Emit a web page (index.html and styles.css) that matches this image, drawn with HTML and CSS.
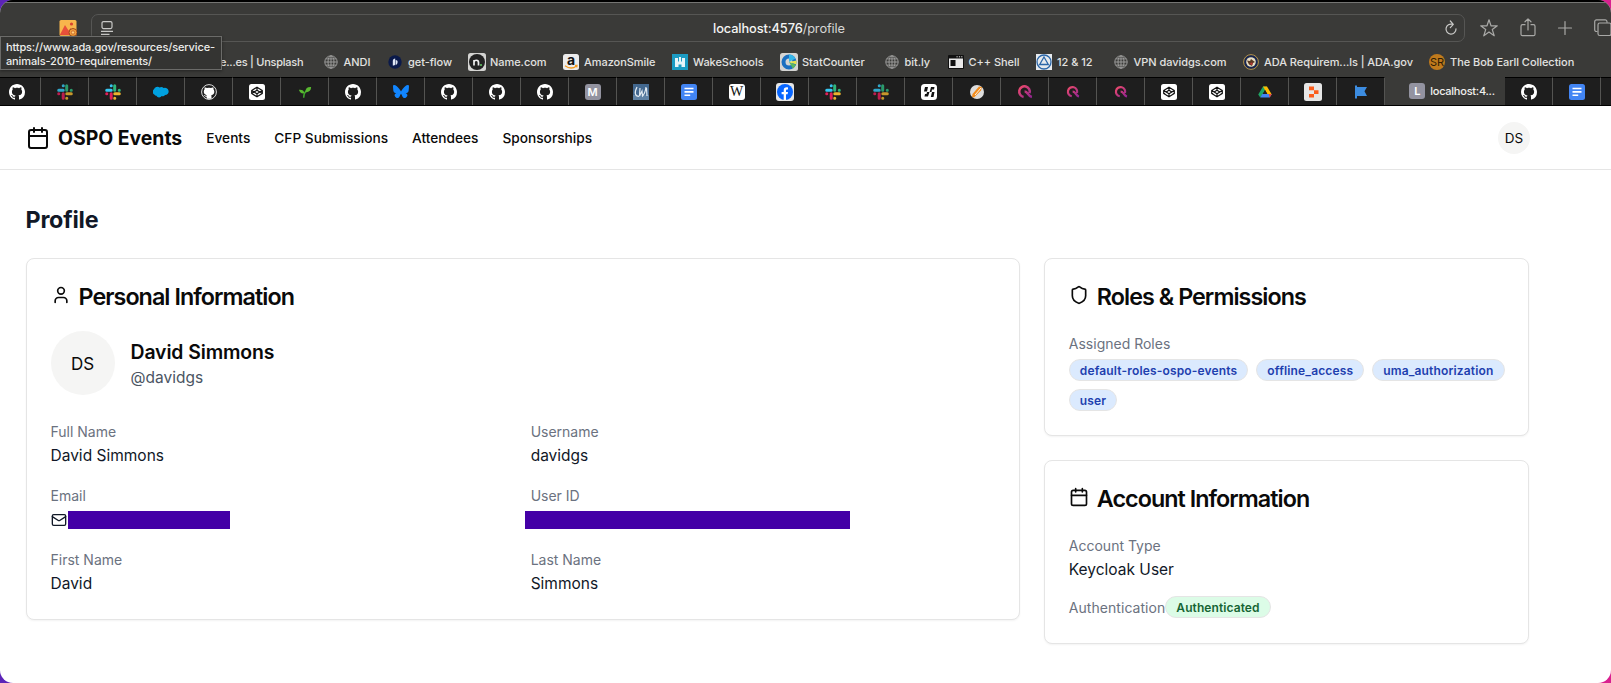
FILE: index.html
```html
<!DOCTYPE html>
<html lang="en">
<head>
<meta charset="utf-8">
<title>OSPO Events</title>
<link rel="stylesheet" href="styles.css">
</head>
<body>
<svg class="sprite" aria-hidden="true">
  <symbol id="github" viewBox="0 0 16 16"><path d="M8 0C3.58 0 0 3.58 0 8c0 3.54 2.29 6.53 5.47 7.59.4.07.55-.17.55-.38 0-.19-.01-.82-.01-1.49-2.01.37-2.53-.49-2.69-.94-.09-.23-.48-.94-.82-1.13-.28-.15-.68-.52-.01-.53.63-.01 1.08.58 1.23.82.72 1.21 1.87.87 2.33.66.07-.52.28-.87.51-1.07-1.78-.2-3.64-.89-3.64-3.95 0-.87.31-1.59.82-2.15-.08-.2-.36-1.02.08-2.12 0 0 .67-.21 2.2.82.64-.18 1.32-.27 2-.27s1.36.09 2 .27c1.53-1.04 2.2-.82 2.2-.82.44 1.1.16 1.92.08 2.12.51.56.82 1.27.82 2.15 0 3.07-1.87 3.75-3.65 3.95.29.25.54.73.54 1.48 0 1.07-.01 1.93-.01 2.2 0 .21.15.46.55.38A8.01 8.01 0 0 0 16 8c0-4.42-3.58-8-8-8z" fill="#fff"/></symbol>
  <symbol id="github-ring" viewBox="0 0 16 16"><circle cx="8" cy="8" r="7.4" fill="#1e1e1e" stroke="#ddd" stroke-width="1"/><path d="M3.6 3.2 6 4.1a7 7 0 0 1 4 0l2.4-.9.2 2.400c1.600 2.400.400 5.400-2.500 5.800.5.700.5 1.500.4 3.400H5.700v-2c-2 .3-2.200-1-3.200-1.700 1.300-.3 1.700 1 3 .7.1-.3 0-.2.400-.600C2.900 10.800 2 7.600 3.500 5.600z" fill="#fff"/></symbol>
  <symbol id="slack" viewBox="0 0 16 16"><g stroke-width="3" stroke-linecap="round" fill="none"><path d="M6.200 1.800h.1M1.700 6.300h4.500" stroke="#36c5f0"/><path d="M9.700 1.700v4.500M14.200 6.300h.1" stroke="#2eb67d"/><path d="M9.800 9.800h4.500M9.700 14.200h.1" stroke="#ecb22e"/><path d="M6.200 9.800v4.500M1.700 9.800h.1" stroke="#e01e5a"/></g></symbol>
  <symbol id="cloud" viewBox="0 0 16 16"><path d="M1.300 10.600A3.300 3.300 0 0 1 1 5.200a3.600 3.600 0 0 1 5.600-1.700 3.100 3.100 0 0 1 4 .6A3.600 3.600 0 1 1 12 11a2.600 2.600 0 0 1-3.300 1 3 3 0 0 1-5.300-.2 2.500 2.500 0 0 1-2.100-1.200z" fill="#00a1e0"/></symbol>
  <symbol id="codepen" viewBox="0 0 16 16"><rect width="16" height="16" rx="2.500" fill="#fff"/><path d="M8 3.200 13.300 6.500v3L8 12.800 2.700 9.500v-3zM8 3.200v3M8 9.800v3M2.700 6.500 8 9.800l5.300-3.300M2.700 9.500 8 6.200l5.300 3.300" fill="none" stroke="#111" stroke-width="1.200" stroke-linejoin="round"/></symbol>
  <symbol id="sprout" viewBox="0 0 16 16"><path d="M6.500 14.500c0-4 .8-6 3.300-8" stroke="#3fa52d" stroke-width="1.700" fill="none"/><path d="M7.400 9.500C4 10 2 8.800 1 5.500c3.600-.4 5.900.7 6.400 4zM8.500 8.200C8.300 4 10.500 2 15 2.300c0 4-2.300 6.200-6.500 5.900z" fill="#58b830"/></symbol>
  <symbol id="bluesky" viewBox="0 0 16 16"><path d="M3.500 1.900C5.300 3.300 7.300 6 8 7.500c.7-1.500 2.700-4.200 4.500-5.600 1.300-1 3.500-1.700 3.500.6 0 .5-.3 3.900-.4 4.500-.5 1.900-2.400 2.400-4.100 2.100 3 .5 3.700 2.200 2.100 3.800-3.100 3.200-4.500-.8-4.800-1.800L8 9.700l-.8 1.400c-.3 1-1.700 5-4.800 1.800-1.600-1.600-.9-3.300 2.100-3.800-1.700.3-3.600-.2-4.100-2.100C.3 6.400 0 3 0 2.500c0-2.300 2.100-1.600 3.500-.6z" fill="#1185fe"/></symbol>
  <symbol id="docs" viewBox="0 0 16 16"><rect width="16" height="16" rx="2.500" fill="#4285f4"/><path d="M3.500 4.500h9M3.500 7.900h9M3.500 11.300h5.700" stroke="#fff" stroke-width="1.600"/></symbol>
  <symbol id="signature" viewBox="0 0 16 16"><rect width="16" height="16" fill="#43688f"/><path d="M0 11h16v5H0z" fill="#5f82a4"/><path d="M4 3C1 9 2 12 6 12.500M7 4l-.5 8L9 7l.5 5c2-2 3-5 3.500-9M13.500 4l.5 8" fill="none" stroke="#e4ecf2" stroke-width="1.200"/></symbol>
  <symbol id="facebook" viewBox="0 0 18 18"><rect width="18" height="18" rx="3" fill="#e6e6e6"/><circle cx="9" cy="9" r="8" fill="#0866ff"/><path d="M7.700 17v-5.700H5.600V8.900h2.100V7.600c0-2.600 1.300-3.600 4.300-3.200v2.100c-1.500-.1-2 .1-2 1.400v1H12l-.4 2.400H10V17z" fill="#fff"/></symbol>
  <symbol id="checker" viewBox="0 0 16 16"><rect width="16" height="16" rx="3.500" fill="#fff"/><path d="M4 3h3L6 7.500H3zM10 3h3.500L13 5.500h-2L10.500 8H8.700zM6 8h2.500L7 12.500H3.500L4 10h1.500zM11 8h2.500l-1 5H9.800z" fill="#111"/></symbol>
  <symbol id="orange-ball" viewBox="0 0 16 16"><circle cx="8" cy="8" r="7" fill="#ddd"/><path d="M3.500 10 10 2.500l3 .5-1 3.500L5 13.500l-2-.5z" fill="#f28c1c"/><path d="m6 11 6-7" stroke="#fff" stroke-width=".9"/></symbol>
  <symbol id="quill" viewBox="0 0 16 16"><defs><linearGradient id="pink" x1="0" y1="0" x2="1" y2="1"><stop offset="0" stop-color="#ef4b6c"/><stop offset="1" stop-color="#8f2390"/></linearGradient></defs><path d="M6.600 12.900A5.300 5.300 0 1 1 12.600 9.200M7.600 7.500c1.600 0 2.300.8 3.300 2.200 1 1.600 1.800 3 4 3.400" fill="none" stroke="url(#pink)" stroke-width="2.500"/></symbol>
  <symbol id="drive" viewBox="0 0 16 16"><path d="M5.700 1.800h4.600L5 11l-2.500 3.200L.3 10.900z" fill="#1fa463"/><path d="M5.700 1.800h4.600l5.400 9.100H11z" fill="#ffba00"/><path d="m2.600 14.300 2.300-4h10.800l-2.300 4z" fill="#4285f4"/><path d="M12.200 10.300h3.500l-2.300 4z" fill="#ea4335"/><path d="m8 5.800 2.600 4.500H5.400z" fill="#1e1e1e"/></symbol>
  <symbol id="blocks" viewBox="0 0 18 18"><rect width="18" height="18" rx="2.500" fill="#e6e6e6"/><path d="M5 3.500h5v3.700H5zM10 7.200h4.500v3.700H10zM5 10.900h5v3.700H5z" fill="#fb5d1d"/></symbol>
  <symbol id="flag" viewBox="0 0 16 16"><path d="M2 1.500h2V3h10l-2.500 4.300L14 12H4v2.500H2z" fill="#3c8ce0"/></symbol>
  <symbol id="globe" viewBox="0 0 14 14"><g fill="none" stroke="#a3a3a1" stroke-width=".9"><circle cx="7" cy="7" r="6.200"/><ellipse cx="7" cy="7" rx="3" ry="6.200"/><path d="M7 .8v12.400M.8 7h12.400M1.700 3.900h10.600M1.700 10.100h10.600"/></g></symbol>
  <symbol id="calendar" viewBox="0 0 24 24"><g fill="none" stroke="currentColor" stroke-width="2" stroke-linecap="round" stroke-linejoin="round"><path d="M8 2v4M16 2v4M3 10h18"/><rect x="3" y="4" width="18" height="18" rx="2"/></g></symbol>
</svg>

<div class="window">
  <div class="chrome">
    <div class="toolbar">
      <svg class="picture-icon" viewBox="0 0 18 18"><rect x=".5" y="1" width="17" height="16" rx="1.500" fill="#f8b64c"/><path d="M.8 16 6 6l3.500 5.500L12 9v7z" fill="#e8503a"/><circle cx="12.500" cy="5" r="1.600" fill="#d9432f"/><circle cx="14" cy="13.500" r="4" fill="#f3a33b" stroke="#a04a20"/><circle cx="14" cy="13.500" r="1.700" fill="#ffd27a" stroke="#c65b2a" stroke-width=".8"/></svg>
      <div class="address">
        <svg class="reader-icon" viewBox="0 0 14 16"><g fill="none" stroke="#c9c9c7" stroke-width="1.200"><rect x="2" y="1.600" width="10" height="7" rx="1.500"/><path d="M1 11.400h12M1 14.400h8.500"/></g></svg>
        <span class="url"><b>localhost:4576</b>/profile</span>
        <svg class="reload-icon" viewBox="0 0 14 16"><path d="M8.500 4.300A5 5 0 1 0 12 8.800M6.300 1 9.300 4.300 6.300 7.600" fill="none" stroke="#c9c9c7" stroke-width="1.200" stroke-linecap="round" stroke-linejoin="round"/></svg>
      </div>
      <svg class="tool star" viewBox="0 0 20 20"><path d="m10 1.800 2 6h6.300l-5 3.800 1.900 6.200L10 14.100l-5.200 3.700 1.900-6.200-5-3.800H8z" fill="none" stroke="#a9a9a7" stroke-width="1.200" stroke-linejoin="round"/></svg>
      <svg class="tool share" viewBox="0 0 20 20"><path d="M7 6.700H4.500a1.500 1.500 0 0 0-1.500 1.500v8a1.500 1.500 0 0 0 1.500 1.500h11a1.500 1.500 0 0 0 1.500-1.500v-8a1.500 1.500 0 0 0-1.500-1.500H13M10 12V1M7 3.800 10 .9l3 2.900" fill="none" stroke="#a9a9a7" stroke-width="1.200" stroke-linecap="round" stroke-linejoin="round"/></svg>
      <svg class="tool plus" viewBox="0 0 20 20"><path d="M10 3.500v13M3.500 10h13" stroke="#a9a9a7" stroke-width="1.200" stroke-linecap="round"/></svg>
      <svg class="tool copies" viewBox="0 0 20 20"><g fill="none" stroke="#a9a9a7" stroke-width="1.200"><path d="M4.500 13.500H3.500A1.800 1.800 0 0 1 1.700 11.700v-8A1.800 1.800 0 0 1 3.500 1.900h8.800A1.800 1.800 0 0 1 14 3.700v1"/><rect x="5" y="5" width="13" height="12.500" rx="1.800"/></g></svg>
    </div>
    <div class="bookmarks">
      <span class="bm first"><i><svg width="16" height="16" viewBox="0 0 16 16"><rect width="16" height="16" rx="2" fill="#e6e6e6"/></svg></i><em>e...es | Unsplash</em></span>
      <span class="bm"><i><svg width="14" height="14"><use href="#globe"/></svg></i><em>ANDI</em></span>
      <span class="bm"><i><svg width="14" height="14" viewBox="0 0 14 14"><circle cx="7" cy="7" r="6.700" fill="#0b1a4a"/><path d="M4.800 6c0-1.500 1-2.500 2.400-2.500V9c0 1-1 1.600-2.400 1.600zM7.700 5c1.200 0 1.900.7 1.900 1.800 0 1.700-.5 2.700-1.900 3.500z" fill="#dfe6f5"/></svg></i><em>get-flow</em></span>
      <span class="bm"><i><svg width="18" height="18" viewBox="0 0 18 18"><rect width="18" height="18" rx="2.500" fill="#d4d4d2"/><circle cx="9" cy="9" r="8" fill="#222"/><path d="M6 12.500V7M6 9c.5-2.400 4.500-2.400 4.500.5v3" fill="none" stroke="#eee" stroke-width="1.700"/><circle cx="13" cy="12" r="1" fill="#6c6"/></svg></i><em>Name.com</em></span>
      <span class="bm"><i><svg width="16" height="16" viewBox="0 0 16 16"><rect width="16" height="16" rx="2.500" fill="#ececec"/><text x="8" y="11" text-anchor="middle" class="glyph-a">a</text><path d="M2 11.700c4 3 8 3 11.500.3M12 11.500l2-.1-.3 2" fill="none" stroke="#f39a1f" stroke-width="1.300"/></svg></i><em>AmazonSmile</em></span>
      <span class="bm"><i><svg width="16" height="16" viewBox="0 0 16 16"><rect width="16" height="16" fill="#1c9cc4"/><path d="M3 4h3v3.500h1V3h2v4.500h1V4h3v9H9.500v-2.500h-3V13H3z" fill="#e8f5fa"/></svg></i><em>WakeSchools</em></span>
      <span class="bm"><i><svg width="18" height="18" viewBox="0 0 18 18"><rect width="18" height="18" rx="2.500" fill="#d4d4d2"/><circle cx="9" cy="9" r="5.500" fill="none" stroke="#1a6fc0" stroke-width="4"/><path d="M9 9V1.500a7.500 7.500 0 0 1 6.500 4z" fill="#35b6e8"/><path d="m9 9 7.500-1.500v4z" fill="#e8e34a"/><path d="m9 9 7 3-3 3.700z" fill="#5cb85c"/></svg></i><em>StatCounter</em></span>
      <span class="bm"><i><svg width="14" height="14"><use href="#globe"/></svg></i><em>bit.ly</em></span>
      <span class="bm"><i><svg width="16" height="14" viewBox="0 0 16 14"><rect width="16" height="14" rx="1" fill="#111"/><rect x="1" y="3.500" width="14" height="9.500" fill="#e9e9e9"/><rect x="2.500" y="5" width="5" height="6" fill="#111"/><path d="M8.500 1.800h1.200M10.900 1.800h1.200M13.200 1.800h1.200" stroke="#ddd"/></svg></i><em>C++ Shell</em></span>
      <span class="bm"><i><svg width="16" height="16" viewBox="0 0 16 16"><rect width="16" height="16" fill="#e6eaee"/><circle cx="8" cy="8" r="7" fill="none" stroke="#2b66a8" stroke-width="1.300"/><path d="m8 3 4.300 7.500H3.700z" fill="none" stroke="#2b66a8" stroke-width="1.300"/></svg></i><em>12 &amp; 12</em></span>
      <span class="bm"><i><svg width="14" height="14"><use href="#globe"/></svg></i><em>VPN davidgs.com</em></span>
      <span class="bm"><i><svg width="16" height="16" viewBox="0 0 16 16"><circle cx="8" cy="8" r="7.400" fill="#18264f" stroke="#b79347" stroke-width="1"/><circle cx="8" cy="8" r="4.800" fill="#e9dfc4"/><path d="m4 6.500 3 .5 1-2 4 3-2 1-1 3-3-1.500z" fill="#5b3a22"/><path d="m7 9 2.500-.5v2L8 11z" fill="#b33"/></svg></i><em>ADA Requirem...ls | ADA.gov</em></span>
      <span class="bm"><i><svg width="16" height="16" viewBox="0 0 16 16"><circle cx="8" cy="8" r="8" fill="#c07a1c"/><text x="8" y="12" text-anchor="middle" class="glyph-sr">SR</text></svg></i><em>The Bob Earll Collection</em></span>
    </div>
    <div class="tabs">
      <span class="tab"><svg><use href="#github"/></svg></span>
      <span class="tab"><svg class="dim"><use href="#slack"/></svg></span>
      <span class="tab"><svg><use href="#slack"/></svg></span>
      <span class="tab"><svg><use href="#cloud"/></svg></span>
      <span class="tab"><svg><use href="#github-ring"/></svg></span>
      <span class="tab"><svg><use href="#codepen"/></svg></span>
      <span class="tab"><svg class="small"><use href="#sprout"/></svg></span>
      <span class="tab"><svg><use href="#github"/></svg></span>
      <span class="tab"><svg><use href="#bluesky"/></svg></span>
      <span class="tab"><svg><use href="#github"/></svg></span>
      <span class="tab"><svg><use href="#github"/></svg></span>
      <span class="tab"><svg><use href="#github"/></svg></span>
      <span class="tab"><b class="letter">M</b></span>
      <span class="tab"><svg><use href="#signature"/></svg></span>
      <span class="tab"><svg><use href="#docs"/></svg></span>
      <span class="tab"><b class="letter wiki">W</b></span>
      <span class="tab"><svg class="big"><use href="#facebook"/></svg></span>
      <span class="tab"><svg><use href="#slack"/></svg></span>
      <span class="tab"><svg class="dim"><use href="#slack"/></svg></span>
      <span class="tab"><svg><use href="#checker"/></svg></span>
      <span class="tab"><svg><use href="#orange-ball"/></svg></span>
      <span class="tab"><svg><use href="#quill"/></svg></span>
      <span class="tab"><svg class="small"><use href="#quill"/></svg></span>
      <span class="tab"><svg class="small"><use href="#quill"/></svg></span>
      <span class="tab"><svg><use href="#codepen"/></svg></span>
      <span class="tab"><svg><use href="#codepen"/></svg></span>
      <span class="tab"><svg class="small"><use href="#drive"/></svg></span>
      <span class="tab"><svg class="big"><use href="#blocks"/></svg></span>
      <span class="tab"><svg><use href="#flag"/></svg></span>
      <span class="tab active"><b class="letter">L</b><em>localhost:4...</em></span>
      <span class="tab"><svg><use href="#github"/></svg></span>
      <span class="tab"><svg><use href="#docs"/></svg></span>
      <span class="tab"></span>
    </div>
    <div class="tooltip">https://www.ada.gov/resources/service-<br>animals-2010-requirements/</div>
  </div>

  <header class="site-header">
    <svg class="logo"><use href="#calendar"/></svg>
    <span class="brand">OSPO Events</span>
    <nav class="nav"><a>Events</a><a>CFP Submissions</a><a>Attendees</a><a>Sponsorships</a></nav>
    <span class="avatar small-avatar">DS</span>
  </header>

  <main class="main">
    <h1>Profile</h1>
    <div class="layout">
      <section class="card">
        <h2><svg viewBox="0 0 24 24"><g fill="none" stroke="currentColor" stroke-width="2" stroke-linecap="round" stroke-linejoin="round"><path d="M19 21v-2a4 4 0 0 0-4-4H9a4 4 0 0 0-4 4v2"/><circle cx="12" cy="7" r="4"/></g></svg><span>Personal Information</span></h2>
        <div class="person">
          <span class="avatar big-avatar">DS</span>
          <div><h3>David Simmons</h3><p class="handle">@davidgs</p></div>
        </div>
        <div class="fields">
          <div><label>Full Name</label><p>David Simmons</p></div>
          <div><label>Username</label><p>davidgs</p></div>
          <div><label>Email</label><p class="masked"><svg viewBox="0 0 24 24"><g fill="none" stroke="currentColor" stroke-width="2" stroke-linecap="round" stroke-linejoin="round"><rect x="2" y="4" width="20" height="16" rx="2"/><path d="m22 7-8.970 5.700a1.940 1.940 0 0 1-2.060 0L2 7"/></g></svg><i class="mask mask-email"></i></p></div>
          <div><label>User ID</label><p class="masked"><i class="mask mask-id"></i></p></div>
          <div><label>First Name</label><p>David</p></div>
          <div><label>Last Name</label><p>Simmons</p></div>
        </div>
      </section>
      <div class="side">
        <section class="card">
          <h2><svg viewBox="0 0 24 24"><path d="M20 13c0 5-3.500 7.500-7.660 8.950a1 1 0 0 1-.67-.01C7.500 20.500 4 18 4 13V6a1 1 0 0 1 1-1c2 0 4.500-1.200 6.240-2.720a1.170 1.170 0 0 1 1.520 0C14.510 3.810 17 5 19 5a1 1 0 0 1 1 1z" fill="none" stroke="currentColor" stroke-width="2" stroke-linecap="round" stroke-linejoin="round"/></svg><span>Roles &amp; Permissions</span></h2>
          <label>Assigned Roles</label>
          <div class="chips"><span class="chip">default-roles-ospo-events</span><span class="chip">offline_access</span><span class="chip">uma_authorization</span><span class="chip">user</span></div>
        </section>
        <section class="card">
          <h2><svg><use href="#calendar"/></svg><span>Account Information</span></h2>
          <div><label>Account Type</label><p>Keycloak User</p></div>
          <div class="auth"><label>Authentication</label><span class="chip green">Authenticated</span></div>
        </section>
      </div>
    </div>
  </main>
</div>
</body>
</html>
```
FILE: styles.css
```css
* { box-sizing: border-box; }
body {
  margin: 0;
  height: 683px;
  overflow: hidden;
  font-family: Inter, "Liberation Sans", sans-serif;
  color: #0a0a0a;
  background: linear-gradient(90deg, #5c24b8 0 50%, #d9208f 50%);
}
.sprite { position: absolute; width: 0; height: 0; }
.window { height: 683px; background: #fff; border-radius: 13px; overflow: hidden; }
svg { display: block; flex: none; }
em, i { font-style: normal; }

/* Browser chrome */
.chrome { position: relative; height: 106px; background: #3a3a38; border-top: 2px solid #000; border-bottom: 1px solid #000; box-shadow: inset 0 1px #757573; overflow: hidden; }
.toolbar { display: flex; align-items: center; height: 51px; padding-left: 59px; }
.picture-icon { width: 18px; height: 18px; margin-right: 14px; }
.address { display: flex; flex: none; align-items: center; width: 1374px; height: 28px; padding: 0 6px 0 8px; border: 1px solid #565654; border-radius: 7px; }
.reader-icon { width: 14px; height: 16px; }
.reload-icon { width: 14px; height: 16px; }
.url { flex: 1; text-align: center; font-size: 12.800px; letter-spacing: -.1px; color: #d6d6d4; padding-top: 1px; }
.url b { font-weight: 500; color: #f4f4f2; }
.tool { width: 20px; height: 20px; }
.star { margin-left: 14px; }
.share { margin-left: 19px; }
.plus { margin-left: 17px; }
.copies { margin-left: 18px; }

.bookmarks {
  display: grid;
  grid-template-columns: 184.5px 64.5px 82px 94px 109px 109px 102.5px 64px 88.5px 76.5px 130.5px 186px auto;
  height: 24px;
  margin-top: -3px;
  padding-left: 136px;
  font-size: 11px;
  letter-spacing: -.05px;
  font-weight: 500;
  color: #e2e2e0;
  white-space: nowrap;
}
.bm { display: flex; align-items: center; gap: 3px; }
.bm i { display: flex; justify-content: center; width: 20px; }
.first em { margin-left: 61px; letter-spacing: -.25px; }
.glyph-a { font: bold 14px Inter, sans-serif; fill: #111; }
.glyph-sr { font: 11px Inter, sans-serif; fill: #2e1c05; }

.tabs { display: flex; height: 28px; margin-top: 3px; margin-left: -7px; }
.tab { display: flex; flex: none; align-items: center; justify-content: center; width: 48px; height: 28px; border-right: 1px solid #545452; border-top: 1px solid #000; background: #1e1e1e; }
.tab svg { width: 16px; height: 16px; }
.tab .small { width: 14px; height: 14px; }
.tab .big { width: 18px; height: 18px; }
.tab .dim { opacity: .82; }
.tab.active { width: 120px; gap: 5px; padding-left: 14px; border-top: 0; border-right: 0; background: #3a3a38; font-size: 11px; letter-spacing: -.25px; font-weight: 500; color: #f0f0ee; }
.letter { display: flex; align-items: center; justify-content: center; width: 16px; height: 16px; border-radius: 3px; background: #9393a0; color: #fff; font-size: 11px; font-weight: 600; }
.wiki { background: #fff; color: #111; font: 14px "Liberation Serif", serif; }
.tooltip { position: absolute; left: 0; top: 34px; width: 222px; height: 34px; padding: 3px 0 0 5px; border: 1px solid #6b6b69; background: #343432; box-shadow: 0 1px 3px #0006; font-size: 11px; letter-spacing: -.13px; line-height: 14px; font-weight: 500; color: #ededeb; white-space: nowrap; }

/* Site header */
.site-header { display: flex; align-items: center; height: 64px; padding: 0 81px 0 26px; border-bottom: 1px solid #e5e5e5; }
.logo { width: 24px; height: 24px; margin-right: 8px; }
.brand { font-size: 19.400px; font-weight: 700; margin-right: 24px; }
.nav { display: flex; gap: 24px; flex: 1; font-size: 13.700px; font-weight: 500; }
.avatar { display: flex; align-items: center; justify-content: center; border-radius: 50%; background: #f5f5f4; }
.small-avatar { width: 32px; height: 32px; font-size: 13.500px; }
.big-avatar { width: 64px; height: 64px; font-size: 17px; padding-top: 1px; }

/* Profile page */
.main { padding: 32px 82px 0 25.500px; }
h1, h2, h3, p { margin: 0; }
h1 { height: 32px; font-size: 23.300px; line-height: 35px; letter-spacing: -.2px; font-weight: 700; color: #111827; margin-bottom: 24px; }
.layout { display: grid; grid-template-columns: 994.300px 1fr; gap: 24px; align-items: start; }
.card { border: 1px solid #e5e5e5; border-radius: 8px; padding: 24px; box-shadow: 0 1px 2px #0000000d; background: #fff; }
h2 { display: flex; align-items: center; gap: 8px; height: 24px; font-size: 23.300px; line-height: 24px; font-weight: 600; letter-spacing: -.95px; margin-bottom: 24px; }
h2 svg { width: 20px; height: 20px; }
h2 span { padding-top: 3px; }
.person { display: flex; align-items: center; gap: 16px; margin-bottom: 24px; }
h3 { height: 28px; font-size: 19.400px; line-height: 30px; letter-spacing: -.1px; font-weight: 600; }
.handle { color: #4b5563; }
.fields { display: grid; grid-template-columns: 1fr 1fr; gap: 16px; }
label { display: block; height: 24px; font-size: 14px; line-height: 26px; color: #6b7280; }
p { font-size: 15.500px; line-height: 26px; height: 24px; color: #111827; }
.masked { display: flex; align-items: center; padding-top: 2px; }
.masked svg { width: 16px; height: 16px; }
.mask { height: 18.500px; background: #4400a6; }
.mask-email { width: 162px; margin-left: 1px; }
.mask-id { width: 325px; margin-left: -6px; }
.side { display: grid; gap: 24px; }
.chips { display: flex; flex-wrap: wrap; gap: 8px; margin: 4px -8px 0 0; }
.chip { height: 22px; padding: 0 10px; border: 1px solid #e5e5e5; border-radius: 11px; background: #dbeafe; color: #1e40af; font-size: 12px; letter-spacing: .16px; line-height: 21px; font-weight: 600; white-space: nowrap; }
.green { background: #dcfce7; color: #166534; letter-spacing: .08px; }
.auth { display: flex; align-items: center; margin-top: 14px; }
.auth label { letter-spacing: .05px; }
```
